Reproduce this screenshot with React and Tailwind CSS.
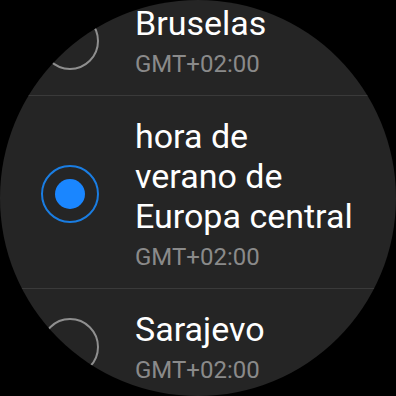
import React from "react";

function Radio({ selected }) {
  if (selected) {
    return (
      <div className="w-[58px] h-[58px] rounded-full border-2 border-[#1a7de2] flex items-center justify-center shrink-0">
        <div className="w-[30px] h-[30px] rounded-full bg-[#1a86ff]" />
      </div>
    );
  }
  return <div className="w-[58px] h-[58px] rounded-full border-2 border-[#8f8f8f] shrink-0" />;
}

function Item({ title, selected, last }) {
  return (
    <div className={"flex items-center pt-5 pb-[17px] " + (last ? "" : "border-b border-[#3a3a3a]")}>
      <div className="w-[135px] flex justify-start pl-[41px] shrink-0">
        <Radio selected={selected} />
      </div>
      <div className="flex flex-col">
        <div className="text-[34px] leading-[40px] text-white">{title}</div>
        <div className="mt-[7px] text-[24px] leading-[28px] text-[#8a8a8a]">GMT+02:00</div>
      </div>
    </div>
  );
}

export default function App() {
  return (
    <div className="w-[396px] h-[396px] bg-black" style={{ fontFamily: "Roboto, 'Noto Sans', sans-serif" }}>
      <div className="w-[396px] h-[396px] rounded-full overflow-hidden bg-[#252525]">
        <div className="-mt-[17px]">
          <Item title="Bruselas" />
          <Item title={<>hora de<br />verano de<br />Europa central</>} selected />
          <Item title="Sarajevo" last />
        </div>
      </div>
    </div>
  );
}
